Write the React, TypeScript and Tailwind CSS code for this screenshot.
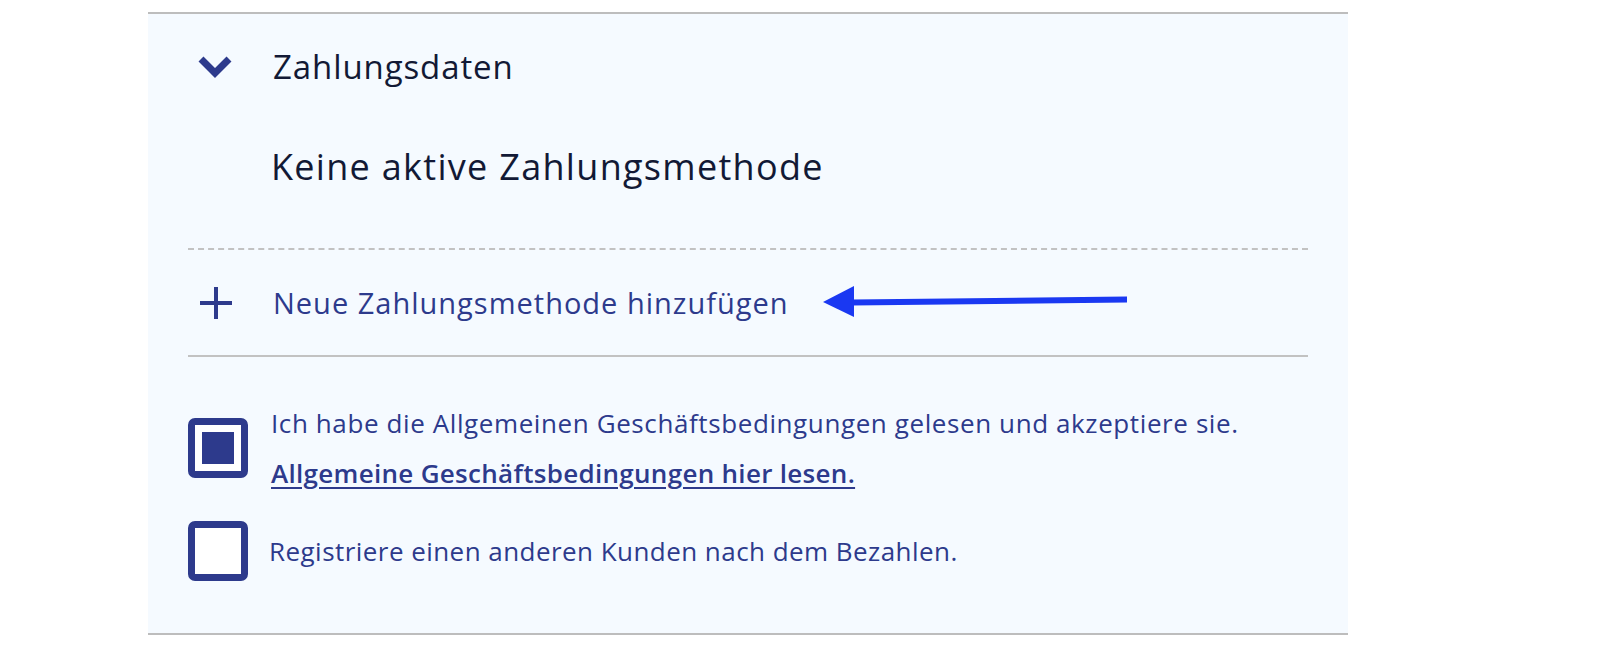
import React from "react";

const NAVY = "text-[#2d3a8c]";

function Checkbox({ checked }: { checked?: boolean }) {
  return (
    <div className="w-[60px] h-[60px] shrink-0 rounded-[7px] border-[7px] border-[#2d3a8c] bg-white flex items-center justify-center">
      {checked && <div className="w-[32px] h-[32px] bg-[#2d3a8c]" />}
    </div>
  );
}

export default function App() {
  return (
    <div
      className="w-[1606px] h-[654px] bg-white pt-[12px] pl-[148px]"
      style={{ fontFamily: "'Open Sans', 'Noto Sans', sans-serif" }}
    >
      <div className="relative w-[1200px] border-y-2 border-[#bdbdbd] bg-[#f5faff]">
        <div className="px-[40px]">
          {/* header */}
          <div className="h-[106px] flex items-center">
            <div className="w-[85px] pl-[10px]">
              <svg width="34" height="22" viewBox="0 0 34 22">
                <path d="M3 3 L17 17 L31 3" fill="none" stroke="#2d3a8c" strokeWidth="7" />
              </svg>
            </div>
            <span className="text-[33px] tracking-[0.9px] text-[#121935]">Zahlungsdaten</span>
          </div>

          <div className="h-[94px] flex items-center pl-[83px]">
            <span className="text-[36px] tracking-[1.3px] text-[#121935]">
              Keine aktive Zahlungsmethode
            </span>
          </div>

          <div className="mt-[34px] border-t-2 border-dashed border-[#c2c2c2]" />

          <div className="h-[105px] flex items-center">
            <div className="w-[85px] pl-[12px]">
              <svg width="32" height="32" viewBox="0 0 32 32">
                <rect x="0" y="14" width="32" height="4" fill="#2d3a8c" />
                <rect x="14" y="0" width="4" height="32" fill="#2d3a8c" />
              </svg>
            </div>
            <span className={`text-[29px] tracking-[1px] ${NAVY}`}>
              Neue Zahlungsmethode hinzufügen
            </span>
          </div>

          <div className="border-t-2 border-[#c2c2c2]" />

          <div className="pt-[41px] pb-[52px] flex flex-col gap-[23px]">
            <div className="flex items-center gap-[23px]">
              <Checkbox checked />
              <div className={`flex flex-col text-[26px] leading-[50px] tracking-[0.6px] ${NAVY}`}>
                <span>Ich habe die Allgemeinen Geschäftsbedingungen gelesen und akzeptiere sie.</span>
                <span className="font-semibold tracking-[0.3px] underline underline-offset-4">
                  Allgemeine Geschäftsbedingungen hier lesen.
                </span>
              </div>
            </div>
            <div className="flex items-center gap-[21px]">
              <Checkbox />
              <span className={`text-[26px] tracking-[0.45px] ${NAVY}`}>
                Registriere einen anderen Kunden nach dem Bezahlen.
              </span>
            </div>
          </div>
        </div>

        {/* annotation arrow */}
        <svg
          className="absolute left-[672px] top-[268px]"
          width="310"
          height="40"
          viewBox="0 0 310 40"
        >
          <path d="M32 17.5 L307 14.5 L307 20.5 L32 23.5 Z" fill="#1a38f2" />
          <path d="M3 20 L34 4 L34 35 Z" fill="#1a38f2" />
        </svg>
      </div>
    </div>
  );
}
